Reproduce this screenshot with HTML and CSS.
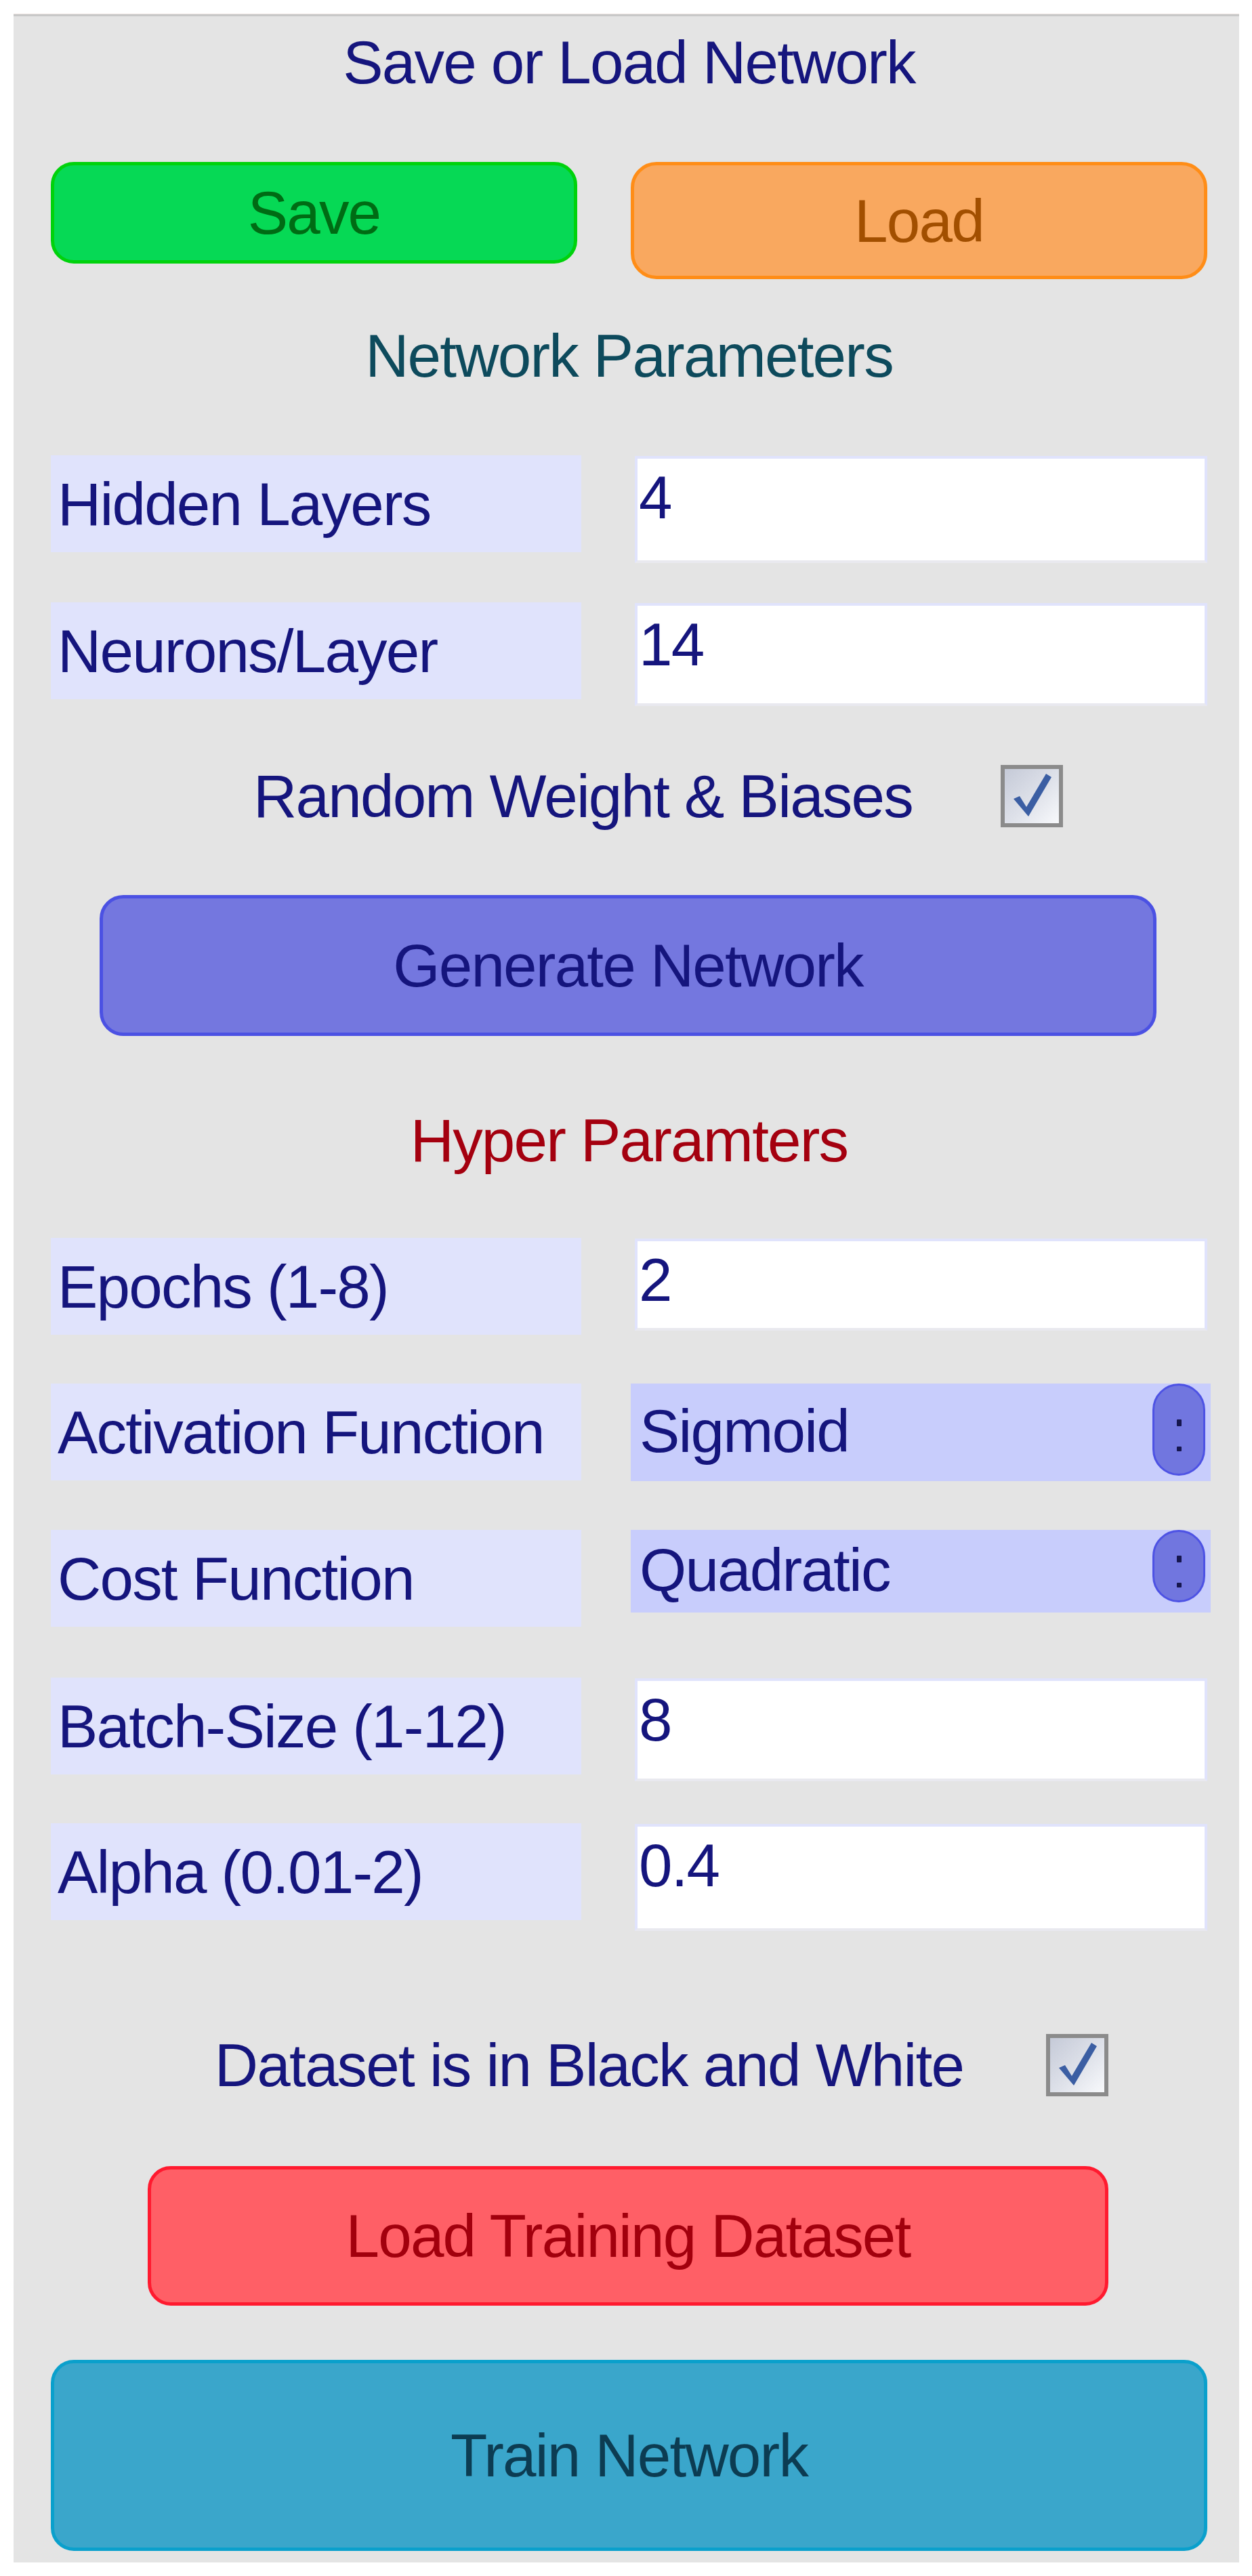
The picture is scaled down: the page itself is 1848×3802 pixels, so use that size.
FILE: index.html
```html
<!DOCTYPE html>
<html lang="en">
<head>
<meta charset="utf-8">
<title>Network Controls</title>
<link rel="stylesheet" href="styles.css">
</head>
<body>
<div class="panel">
  <h2 class="heading heading--navy mb-97">Save or Load Network</h2>
  <div class="pair mb-63">
    <button class="btn btn--save">Save</button>
    <button class="btn btn--load">Load</button>
  </div>

  <h2 class="heading heading--teal mb-97">Network Parameters</h2>
  <div class="row mb-74">
    <div class="label">Hidden Layers</div>
    <div class="input input--tall">4</div>
  </div>
  <div class="row mb-93">
    <div class="label">Neurons/Layer</div>
    <div class="input input--mid">14</div>
  </div>

  <div class="check mb-96">
    <span class="check__text">Random Weight &amp; Biases</span>
    <svg class="check__box" width="92" height="92" viewBox="0 0 92 92">
      <defs>
        <linearGradient id="cbg1" x1="0" y1="0" x2="1" y2="1">
          <stop offset="0" stop-color="#c3c8d6"/>
          <stop offset="0.55" stop-color="#dfe2ea"/>
          <stop offset="1" stop-color="#fafbfd"/>
        </linearGradient>
      </defs>
      <rect x="3" y="3" width="86" height="86" fill="url(#cbg1)" stroke="#8b8b8b" stroke-width="6"/>
      <path d="M19 50 L28 46 L38 62 L67 13 L75 18 L41 76 Z" fill="#3b5ea3"/>
    </svg>
  </div>

  <button class="btn btn--generate mb-104">Generate Network</button>

  <h2 class="heading heading--red mb-94">Hyper Paramters</h2>
  <div class="row mb-72">
    <div class="label">Epochs (1-8)</div>
    <div class="input input--short">2</div>
  </div>
  <div class="row mb-73">
    <div class="label">Activation Function</div>
    <div class="select">
      <span class="select__text">Sigmoid</span>
      <span class="select__pill"><i class="dot dot--up"></i><i class="dot"></i></span>
    </div>
  </div>
  <div class="row mb-75">
    <div class="label">Cost Function</div>
    <div class="select select--short">
      <span class="select__text">Quadratic</span>
      <span class="select__pill"><i class="dot dot--up"></i><i class="dot"></i></span>
    </div>
  </div>
  <div class="row mb-72">
    <div class="label">Batch-Size (1-12)</div>
    <div class="input input--mid">8</div>
  </div>
  <div class="row mb-164">
    <div class="label">Alpha (0.01-2)</div>
    <div class="input input--tall">0.4</div>
  </div>

  <div class="check check--wide mb-99">
    <span class="check__text">Dataset is in Black and White</span>
    <svg class="check__box" width="92" height="92" viewBox="0 0 92 92">
      <defs>
        <linearGradient id="cbg2" x1="0" y1="0" x2="1" y2="1">
          <stop offset="0" stop-color="#c3c8d6"/>
          <stop offset="0.55" stop-color="#dfe2ea"/>
          <stop offset="1" stop-color="#fafbfd"/>
        </linearGradient>
      </defs>
      <rect x="3" y="3" width="86" height="86" fill="url(#cbg2)" stroke="#8b8b8b" stroke-width="6"/>
      <path d="M19 50 L28 46 L38 62 L67 13 L75 18 L41 76 Z" fill="#3b5ea3"/>
    </svg>
  </div>

  <button class="btn btn--dataset mb-80">Load Training Dataset</button>
  <button class="btn btn--train">Train Network</button>
</div>
</body>
</html>
```

FILE: styles.css
```css
* {
  box-sizing: border-box;
}

body {
  margin: 0;
  background: #ffffff;
  font-family: "Liberation Sans", Arial, sans-serif;
}

.panel {
  margin: 21px 0 0 20px;
  width: 1809px;
  background: #e4e4e4;
  border-top: 3px solid #c8c8c8;
  box-shadow: 0 -1px 0 #f0e7e4;
  padding: 18px 47px 17px 55px;
  display: flex;
  flex-direction: column;
  font-size: 89px;
  letter-spacing: -1.8px;
  line-height: 100px;
  color: #15157d;
}

/* spacing helpers */
.mb-63 { margin-bottom: 63px; }
.mb-72 { margin-bottom: 72px; }
.mb-73 { margin-bottom: 73px; }
.mb-74 { margin-bottom: 74px; }
.mb-75 { margin-bottom: 75px; }
.mb-80 { margin-bottom: 80px; }
.mb-93 { margin-bottom: 93px; }
.mb-94 { margin-bottom: 94px; }
.mb-96 { margin-bottom: 96px; }
.mb-97 { margin-bottom: 97px; }
.mb-99 { margin-bottom: 99px; }
.mb-104 { margin-bottom: 104px; }
.mb-164 { margin-bottom: 164px; }

.heading {
  margin-top: 0;
  font-size: 89px;
  font-weight: 400;
  line-height: 100px;
  text-align: center;
  white-space: nowrap;
}

.heading--navy { color: #15157d; }
.heading--teal { color: #0d4a5c; }
.heading--red { color: #a4000f; }

/* buttons */
.btn {
  font-family: inherit;
  font-size: 89px;
  letter-spacing: -1.8px;
  line-height: 100px;
  border: 5px solid;
  border-radius: 34px;
  padding: 0;
  margin-left: 0;
  margin-right: 0;
  margin-top: 0;
  display: flex;
  align-items: center;
  justify-content: center;
  white-space: nowrap;
  cursor: pointer;
}

.pair {
  display: grid;
  grid-template-columns: 777px 1fr;
  column-gap: 79px;
  align-items: start;
}

.btn--save {
  height: 150px;
  background: #06d955;
  border-color: #00d20c;
  color: #006b14;
}

.btn--load {
  height: 173px;
  background: #f9a85f;
  border-color: #ff8d17;
  color: #a24f00;
  border-radius: 38px;
}

.btn--generate {
  align-self: flex-start;
  width: 1560px;
  height: 208px;
  margin-left: 72px;
  background: #7477df;
  border-color: #4b51e3;
  color: #15157d;
  border-radius: 35px;
}

.btn--dataset {
  align-self: flex-start;
  width: 1418px;
  height: 206px;
  margin-left: 143px;
  background: #ff5f66;
  border-color: #ff1a2f;
  color: #a2000d;
}

.btn--train {
  width: 100%;
  height: 282px;
  background: #3aa6cb;
  border-color: #0aa0cc;
  color: #0c3c52;
}

/* label / field rows */
.row {
  display: grid;
  grid-template-columns: 783px 1fr;
  column-gap: 79px;
  align-items: start;
  height: 143px;
}

.label {
  height: 143px;
  background: #e0e3fc;
  display: flex;
  align-items: center;
  padding-left: 10px;
  white-space: nowrap;
}

.input {
  margin-top: 1px;
  background: #ffffff;
  border: 4px solid #e0e3fc;
  border-bottom-color: #e9e9ef;
  padding: 7px 0 0 2px;
  white-space: nowrap;
}

.input--tall { height: 158px; }
.input--mid { height: 152px; }
.input--short { height: 136px; }

.select {
  margin: 0 -5px 0 -6px;
  height: 144px;
  background: #c8cdfc;
  display: flex;
  justify-content: space-between;
  align-items: flex-start;
  padding-left: 13px;
}

.select__text {
  padding-top: 20px;
  white-space: nowrap;
}

.select__pill {
  align-self: stretch;
  width: 78px;
  margin: 0 8px 8px 0;
  background: #7176df;
  border: 3px solid #4d52e4;
  border-radius: 39px;
  display: flex;
  flex-direction: column;
  align-items: center;
  justify-content: center;
  gap: 30px;
  padding-top: 16px;
}

.select--short {
  height: 122px;
}

.select--short .select__text {
  padding-top: 9px;
}

.select--short .select__pill {
  margin-bottom: 15px;
}

.dot {
  display: block;
  width: 7px;
  height: 7px;
  background: #16164e;
  border-radius: 1px;
}

.dot--up {
  height: 10px;
}

/* checkbox rows */
.check {
  display: flex;
  align-items: center;
  justify-content: center;
  gap: 130px;
  height: 100px;
  padding-left: 86px;
}

.check--wide {
  gap: 122px;
  padding-left: 96px;
}

.check__text {
  white-space: nowrap;
}

.check__box {
  flex: none;
  display: block;
}
```
